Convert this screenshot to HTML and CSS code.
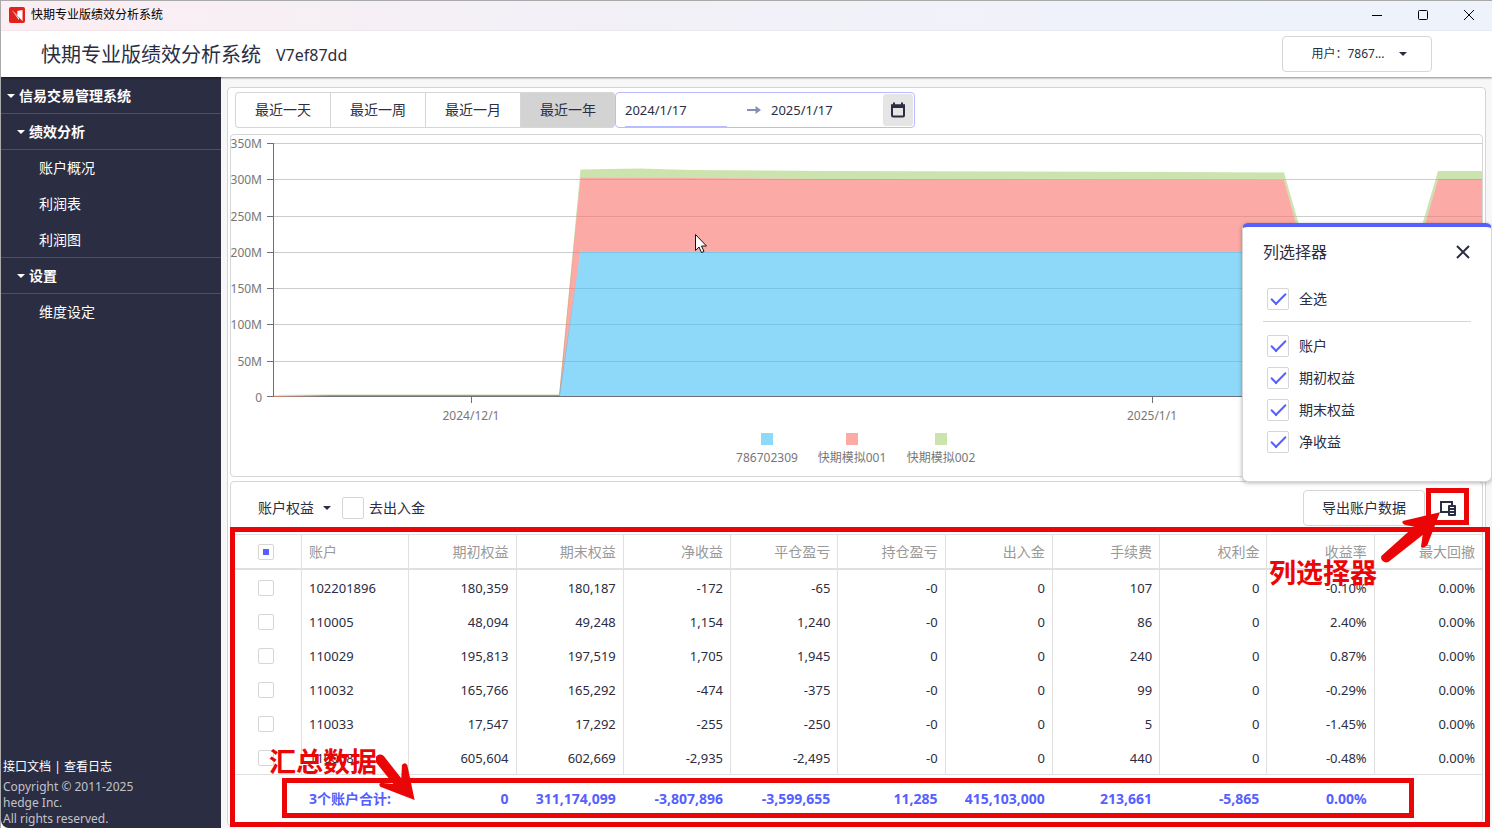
FILE: index.html
```html
<!DOCTYPE html>
<html lang="zh-CN">
<head>
<meta charset="utf-8">
<title>快期专业版绩效分析系统</title>
<link rel="stylesheet" href="styles.css">
</head>
<body>
<div class="window">
  <div class="titlebar">
    <svg class="logo" viewBox="0 0 16 16"><rect width="16" height="16" rx="2" fill="#e2201c"/><path d="M2.500 3 8 7.500V4l5.500-1v11L10 10.500V13Z" fill="#fff"/><path d="M2.500 3 11 12M8 4v4" stroke="#e2201c" stroke-width=".7"/></svg>
    <span class="titlebar-name">快期专业版绩效分析系统</span>
    <button class="win-btn" aria-label="最小化"><svg viewBox="0 0 12 12"><path d="M1 6.500h10"/></svg></button>
    <button class="win-btn" aria-label="最大化"><svg viewBox="0 0 12 12"><rect x="1.500" y="1.500" width="9" height="9" rx="1"/></svg></button>
    <button class="win-btn" aria-label="关闭"><svg viewBox="0 0 12 12"><path d="M1 1l10 10M11 1 1 11"/></svg></button>
  </div>
  <header class="header">
    <h1>快期专业版绩效分析系统</h1>
    <span class="version">V7ef87dd</span>
    <button class="user-btn">用户：7867...<span class="caret"></span></button>
  </header>
  <div class="body">
    <nav class="sidebar">
      <button class="nav-group level-1"><span class="caret"></span>信易交易管理系统</button>
      <button class="nav-group level-2"><span class="caret"></span>绩效分析</button>
      <div class="nav-list">
        <a href="#">账户概况</a>
        <a href="#">利润表</a>
        <a href="#">利润图</a>
      </div>
      <button class="nav-group level-2"><span class="caret"></span>设置</button>
      <div class="nav-list last"><a href="#">维度设定</a></div>
      <div class="side-foot">
        <div class="side-links"><a href="#">接口文档</a> | <a href="#">查看日志</a></div>
        <div>Copyright © 2011-2025</div>
        <div>hedge Inc.</div>
        <div>All rights reserved.</div>
      </div>
    </nav>
    <main class="main">
      <div class="panel">
        <div class="filters">
          <div class="ranges">
            <button>最近一天</button><button>最近一周</button><button>最近一月</button><button class="active">最近一年</button>
          </div>
          <div class="dates">
            <input class="date from" type="text" value="2024/1/17" aria-label="开始日期">
            <svg class="arrow" viewBox="0 0 16 12"><path d="M1 6h10" stroke="#858fb4" stroke-width="2"/><path d="M9.500 2 15 6l-5.500 4Z" fill="#858fb4"/></svg>
            <input class="date to" type="text" value="2025/1/17" aria-label="结束日期">
            <button class="cal" aria-label="选择日期"><svg viewBox="0 0 16 16"><path d="M2 3.500h12v10q0 1-1 1H3q-1 0-1-1Z" fill="none" stroke="#2b2d42" stroke-width="2"/><path d="M1 2.500h14V6H1ZM3 .5h2v3H3ZM11 .5h2v3h-2Z" fill="#2b2d42"/></svg></button>
          </div>
        </div>
        <section class="card chart">
          <svg viewBox="231 135 1251 341" preserveAspectRatio="xMinYMin meet" role="img" aria-label="账户权益">
            <path class="grid" d="M273 143.500H1482M273 179.500H1482M273 216.500H1482M273 252.500H1482M273 288.500H1482M273 324.500H1482M273 361.500H1482"/>
            <path class="green" d="M559 396 580.500 169.500 640 168.500 690 170 830 171 1180 172 1284 172.500 1348 396 1372 396 1438 171H1482V179H1438L1376 396 1344 396 1284 180 820 179 690 178 580.500 177.500 560 396Z"/>
            <path class="pink" d="M559 396 580.500 177.500 690 178 820 179 1284 180 1344 396 1376 396 1438 179H1482V252H1438L1380 396H1340L1284 251H580.500L560 396Z"/>
            <path class="blue" d="M559 396 580.500 251H1284L1340 396ZM1380 396 1438 252H1482V396Z"/>
            <path d="M273.500 395.500 330 394.500H559" fill="none" stroke="#e3ead4"/>
            <path class="axis" d="M273.500 143V397M267 143.500h6M267 179.500h6M267 216.500h6M267 252.500h6M267 288.500h6M267 324.500h6M267 361.500h6M267 396.500H1482M471.500 397v6M1152.500 397v6"/>
            <path d="M274 396.500 330 395.500H559" fill="none" stroke="#d08a70"/>
            <g class="y-labels">
              <text x="262" y="148">350M</text><text x="262" y="184">300M</text><text x="262" y="221">250M</text><text x="262" y="257">200M</text><text x="262" y="293">150M</text><text x="262" y="329">100M</text><text x="262" y="366">50M</text><text x="262" y="402">0</text>
            </g>
            <g class="x-labels">
              <text x="471" y="420">2024/12/1</text><text x="1152" y="420">2025/1/1</text>
              <text x="767" y="462">786702309</text><text x="852" y="462">快期模拟001</text><text x="941" y="462">快期模拟002</text>
            </g>
            <rect class="blue" x="761" y="433" width="12" height="12"/>
            <rect class="pink" x="846" y="433" width="12" height="12"/>
            <rect class="green" x="935" y="433" width="12" height="12"/>
          </svg>
        </section>
        <section class="card data">
          <div class="toolbar">
            <button class="measure">账户权益<span class="caret"></span></button>
            <label class="check"><input type="checkbox">去出入金</label>
            <button class="export">导出账户数据</button>
            <button class="columns" aria-label="列选择器"><svg viewBox="0 0 16 16"><path d="M8 12H1V2h11v3" fill="none" stroke="#2b2d42" stroke-width="2"/><rect x="8" y="5" width="8" height="11" rx="1" fill="#2b2d42"/><path d="M10 7.500h4M10 10.500h4M10 13.500h4" stroke="#fff" stroke-width="1"/></svg></button>
          </div>
          <table>
            <colgroup><col class="sel"><col span="11"></colgroup>
            <thead><tr><th><input type="checkbox" class="partial" aria-label="全选"></th><th>账户</th><th>期初权益</th><th>期末权益</th><th>净收益</th><th>平仓盈亏</th><th>持仓盈亏</th><th>出入金</th><th>手续费</th><th>权利金</th><th>收益率</th><th>最大回撤</th></tr></thead>
            <tbody>
              <tr><td><input type="checkbox" aria-label="102201896"></td><td>102201896</td><td>180,359</td><td>180,187</td><td>-172</td><td>-65</td><td>-0</td><td>0</td><td>107</td><td>0</td><td>-0.10%</td><td>0.00%</td></tr>
              <tr><td><input type="checkbox" aria-label="110005"></td><td>110005</td><td>48,094</td><td>49,248</td><td>1,154</td><td>1,240</td><td>-0</td><td>0</td><td>86</td><td>0</td><td>2.40%</td><td>0.00%</td></tr>
              <tr><td><input type="checkbox" aria-label="110029"></td><td>110029</td><td>195,813</td><td>197,519</td><td>1,705</td><td>1,945</td><td>0</td><td>0</td><td>240</td><td>0</td><td>0.87%</td><td>0.00%</td></tr>
              <tr><td><input type="checkbox" aria-label="110032"></td><td>110032</td><td>165,766</td><td>165,292</td><td>-474</td><td>-375</td><td>-0</td><td>0</td><td>99</td><td>0</td><td>-0.29%</td><td>0.00%</td></tr>
              <tr><td><input type="checkbox" aria-label="110033"></td><td>110033</td><td>17,547</td><td>17,292</td><td>-255</td><td>-250</td><td>-0</td><td>0</td><td>5</td><td>0</td><td>-1.45%</td><td>0.00%</td></tr>
              <tr><td><input type="checkbox" aria-label="110068"></td><td>110068</td><td>605,604</td><td>602,669</td><td>-2,935</td><td>-2,495</td><td>-0</td><td>0</td><td>440</td><td>0</td><td>-0.48%</td><td>0.00%</td></tr>
            </tbody>
            <tfoot><tr><td></td><td>3个账户合计:</td><td>0</td><td>311,174,099</td><td>-3,807,896</td><td>-3,599,655</td><td>11,285</td><td>415,103,000</td><td>213,661</td><td>-5,865</td><td>0.00%</td><td></td></tr></tfoot>
          </table>
          <div class="frame frame-table"></div>
          <div class="frame frame-total"></div>
          <div class="frame frame-columns"></div>
          <div class="note note-columns">列选择器</div>
          <div class="note note-total">汇总数据</div>
          <svg class="pointer pointer-columns" viewBox="1239 480 201 100"><g transform="translate(1240 480) scale(.3333)"><path d="M424 228 522 140 494 134Q485 130 488 123L600 97 562 196Q552 206 543 200L548 165 446 245A15 15 0 0 1 424 228Z"/></g></svg>
          <svg class="pointer pointer-total" viewBox="376 750 41 52"><g transform="translate(0 740) scale(.3333)"><path d="M1152 49 1204 115 1206 75Q1214 65 1222 75L1244 180 1141 140Q1134 132 1143 128L1180 132 1129 68A14 14 0 0 1 1152 49Z"/></g></svg>
        </section>
      </div>
    </main>
  </div>
  <div class="popup" role="dialog" aria-label="列选择器">
    <div class="popup-head"><h2>列选择器</h2><button aria-label="关闭"><svg viewBox="0 0 14 14"><path d="M1 1l12 12M13 1 1 13" stroke="#2b2d42" stroke-width="2"/></svg></button></div>
    <label class="check all"><input type="checkbox" checked>全选</label>
    <div class="options">
      <label class="check"><input type="checkbox" checked>账户</label>
      <label class="check"><input type="checkbox" checked>期初权益</label>
      <label class="check"><input type="checkbox" checked>期末权益</label>
      <label class="check"><input type="checkbox" checked>净收益</label>
    </div>
  </div>
  <svg class="cursor" viewBox="0 0 12 20"><path d="M.5.5V16.500L4 13l2.500 5.500 2.500-1L6.500 12h5Z" fill="#fff" stroke="#111"/></svg>
</div>
</body>
</html>
```
FILE: styles.css
```css
* { box-sizing: border-box; }
body {
  margin: 0;
  background: #fff;
  color: #2b2d42;
  font: 14px/20px "Noto Sans", "Noto Sans CJK SC", sans-serif;
}
button, input { font: inherit; color: inherit; margin: 0; }
button { padding: 0; border: 0; background: none; }
a { color: inherit; text-decoration: none; }
h1, h2 { margin: 0; font-weight: 400; }
.window {
  position: relative;
  display: flex;
  flex-direction: column;
  min-height: calc(100vh - 5px);
  border-top: 1px solid #a9a9a9;
  border-left: 1px solid #a9a9a9;
  overflow: hidden;
}
.caret {
  display: inline-block;
  border: 4px solid transparent;
  border-top-color: currentColor;
  border-bottom: 0;
}
.titlebar {
  display: flex;
  align-items: center;
  height: 30px;
  padding: 0 0 2px 8px;
  background: linear-gradient(90deg, #fceef2, #f3f0f6 33%, #eff2fb 80%, #eef2fb);
  color: #000;
  font-size: 12px;
}
.logo { width: 16px; height: 16px; margin-right: 6px; }
.titlebar-name { flex: 1; }
.win-btn { width: 46px; height: 28px; display: grid; place-items: center; }
.win-btn svg { width: 12px; height: 12px; fill: none; stroke: #000; }
.header {
  display: flex;
  align-items: center;
  height: 46px;
  padding: 0 60px 0 40px;
  box-shadow: 0 1px 2px rgba(0, 0, 0, .45);
  z-index: 1;
}
.header h1 { font-size: 20px; line-height: 46px; padding-top: 2px; }
.version { flex: 1; margin-left: 15px; padding-top: 2px; font-size: 16px; }
.user-btn {
  display: flex;
  align-items: center;
  justify-content: center;
  gap: 14px;
  width: 150px;
  height: 36px;
  padding-left: 4px;
  border: 1px solid #d6d6d6;
  border-radius: 4px;
  font-size: 12px;
}
.body { flex: 1; display: flex; }
.sidebar {
  display: flex;
  flex-direction: column;
  width: 220px;
  padding-top: 1px;
  background: #2b2d42;
  color: #fff;
  border-bottom-left-radius: 8px;
}
.nav-group {
  display: flex;
  align-items: center;
  gap: 4px;
  height: 36px;
  border-bottom: 1px solid #4d4f5c;
  font-weight: 700;
}
.level-1 { padding-left: 6px; }
.level-2 { padding-left: 16px; }
.nav-list { border-bottom: 1px solid #4d4f5c; }
.nav-list.last { border: 0; }
.nav-list a { display: block; height: 36px; line-height: 36px; padding-left: 38px; }
.nav-list a:last-child { height: 35px; }
.side-foot { margin-top: auto; padding: 0 2px 1px; color: #c2c3c9; font-size: 12px; line-height: 16px; }
.side-links { color: #fff; line-height: 24px; }
.main { flex: 1; min-width: 0; display: flex; padding: 10px 6px 2px; background: #f7f7f7; }
.panel {
  flex: 1;
  min-width: 0;
  display: flex;
  flex-direction: column;
  gap: 4px;
  padding: 4px 2px 2px;
  border: 1px solid #d4d4d4;
  border-radius: 4px;
  background: #fff;
}
.filters { display: flex; padding: 0 5px 2px; }
.ranges { display: flex; }
.ranges button {
  width: 95px;
  height: 36px;
  border: 1px solid #d6d6d6;
  border-right: 0;
}
.ranges button:first-child { border-radius: 4px 0 0 4px; }
.ranges .active { background: #d3d3d3; border-radius: 0 4px 4px 0; }
.dates {
  display: flex;
  align-items: center;
  width: 300px;
  height: 36px;
  padding: 0 1px 0 9px;
  border: 1px solid #b9bdff;
  border-radius: 4px;
}
.date { border: 0; padding: 0; outline: 0; background: none; height: 34px; min-width: 0; font-size: 13px; }
.from { width: 102px; border-bottom: 1px solid #b9bdff; }
.arrow { width: 16px; height: 12px; margin: 0 9px 0 19px; }
.to { flex: 1; border-bottom: 1px solid transparent; }
.cal { display: grid; place-items: center; width: 30px; height: 32px; border-radius: 3px; background: #e5e5e5; }
.cal svg { width: 16px; height: 16px; }
.card { border: 1px solid #d6d6d6; border-radius: 4px; }
.chart { overflow: hidden; }
.chart svg { display: block; width: 100%; height: auto; }
.grid { stroke: #ccc; fill: none; }
.axis { stroke: #6e7079; fill: none; }
.blue, .pink, .green { fill-opacity: .6; }
.blue { fill: #43c0f5; }
.pink { fill: #f8716b; }
.green { fill: #a8d076; }
.y-labels, .x-labels { font-size: 12px; fill: #777; text-anchor: end; }
.x-labels { text-anchor: middle; }
.data { flex: 1; position: relative; display: flex; flex-direction: column; }
.toolbar { display: flex; align-items: center; height: 52px; padding: 0 16px 0 27px; }
.measure { display: flex; align-items: center; gap: 9px; margin-right: 11px; }
.check { display: flex; align-items: center; gap: 5px; }
input[type="checkbox"] {
  appearance: none;
  display: grid;
  place-items: center;
  width: 22px;
  height: 22px;
  border: 1px solid #d6d6d6;
  border-radius: 2px;
  background: #fff;
}
input[type="checkbox"]:checked::before {
  content: "";
  width: 13px;
  height: 6px;
  margin-bottom: 4px;
  border: solid #5560ff;
  border-width: 0 0 2px 2px;
  transform: rotate(-45deg);
}
.export { width: 122px; height: 36px; margin-left: auto; border: 1px solid #d6d6d6; border-radius: 4px; }
.columns { display: grid; place-items: center; width: 36px; height: 36px; margin-left: 5px; }
.columns svg { width: 16px; height: 16px; }
table { width: 100%; table-layout: fixed; border-collapse: separate; border-spacing: 0; flex: none; }
.sel { width: 71px; }
th, td { padding: 0 7px; text-align: right; white-space: nowrap; border-right: 1px solid #e0e0e0; }
th { height: 36px; border-top: 1px solid #e0e0e0; border-bottom: 2px solid #e0e0e0; color: #999; font-weight: 400; }
td { height: 34px; font-size: 13px; }
tbody td { padding-top: 1px; }
th:nth-child(2), td:nth-child(2) { text-align: left; }
th:last-child, td:last-child { border-right: 0; }
tfoot td { height: 48px; padding-right: 8px; border-right: 0; border-top: 1px solid #e0e0e0; color: #5560ff; font-size: 14px; font-weight: 700; }
table input[type="checkbox"] { width: 16px; height: 16px; margin: 0 auto; }
.partial::before { content: ""; width: 6px; height: 6px; background: #5560ff; }
.frame { position: absolute; border: 5px solid #ea0606; pointer-events: none; }
.frame-table { inset: 45px -8px -5px -1px; }
.frame-total { top: 296px; left: 51px; right: 68px; height: 40px; }
.frame-columns { top: 6px; right: 13px; width: 43px; height: 37px; }
.note { position: absolute; color: #ea0606; font-size: 27px; font-weight: 700; line-height: 32px; }
.note-columns { top: 75px; right: 105px; }
.note-total { top: 264px; left: 38px; }
.pointer { position: absolute; fill: #ea0606; }
.pointer-columns { top: -2px; right: 42px; width: 201px; height: 100px; }
.pointer-total { top: 268px; left: 145px; width: 41px; height: 52px; }
.popup {
  position: absolute;
  top: 222px;
  right: 0;
  z-index: 2;
  width: 250px;
  padding: 8px 20px 23px;
  border: 1px solid #d6d6d6;
  border-top: 4px solid #5560ff;
  border-radius: 6px;
  background: #fff;
  box-shadow: 0 1px 4px rgba(0, 0, 0, .3);
}
.popup-head { display: flex; align-items: center; justify-content: space-between; height: 34px; }
.popup-head h2 { font-size: 16px; }
.popup-head button { width: 16px; height: 24px; display: grid; place-items: center; }
.popup-head svg { width: 14px; height: 14px; }
.popup .check { height: 32px; padding-left: 4px; gap: 10px; }
.popup .all { height: 53px; padding-top: 8px; border-bottom: 1px solid #d6d6d6; }
.options { padding-top: 8px; }
.cursor { position: absolute; top: 233px; left: 694px; width: 12px; height: 20px; z-index: 3; }
```
